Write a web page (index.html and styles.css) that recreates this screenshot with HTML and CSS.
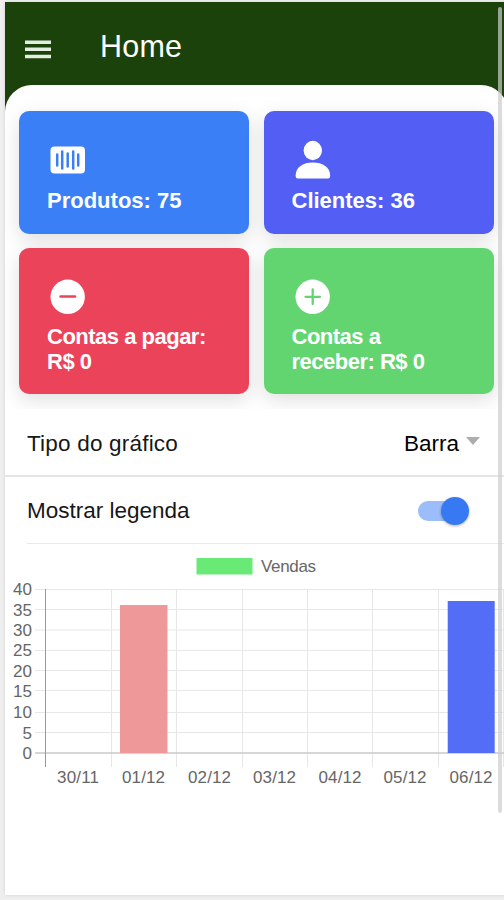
FILE: index.html
```html
<!DOCTYPE html>
<html lang="pt-BR">
<head>
    <meta charset="UTF-8">
    <title>Home</title>
    <link rel="stylesheet" href="styles.css">
</head>
<body>
    <div class="app">
        <header class="toolbar">
            <svg class="menu-icon" width="26" height="20" viewBox="0 0 26 20">
                <path d="M0 2.2h26M0 9.3h26M0 16.5h26" stroke="#e3eee0" stroke-width="3.6"/>
            </svg>
            <h1 class="title">Home</h1>
        </header>

        <main class="content">
            <div class="cards">
                <div class="card card-blue">
                    <svg class="icon" width="42" height="42" viewBox="0 0 42 42">
                        <rect x="3.5" y="7.5" width="34.5" height="27" rx="4" fill="#fff"/>
                        <path d="M10.2 15.5v11M15.2 12.5v17M20.7 14.5v13M26.2 12.5v17M31.2 15.5v11" stroke="#3a7ff6" stroke-width="2.5" stroke-linecap="round"/>
                    </svg>
                    <div class="label">Produtos: 75</div>
                </div>
                <div class="card card-purple">
                    <svg class="icon" width="42" height="42" viewBox="0 0 42 42">
                        <ellipse cx="20.8" cy="11.5" rx="9.2" ry="9.7" fill="#fff"/>
                        <path d="M3.6 37C3.6 28 11 23.5 20.8 23.5S38.2 28 38.2 37Q38.2 39.5 36 39.5H5.8Q3.6 39.5 3.6 37z" fill="#fff"/>
                    </svg>
                    <div class="label">Clientes: 36</div>
                </div>
                <div class="card card-red">
                    <svg class="icon" width="42" height="42" viewBox="0 0 42 42">
                        <circle cx="20.7" cy="20.8" r="17.2" fill="#fff"/>
                        <path d="M13.5 20.5h14.5" stroke="#eb445a" stroke-width="2.5" stroke-linecap="round"/>
                    </svg>
                    <div class="label">Contas a pagar: R$ 0</div>
                </div>
                <div class="card card-green">
                    <svg class="icon" width="42" height="42" viewBox="0 0 42 42">
                        <circle cx="20.7" cy="20.8" r="17.2" fill="#fff"/>
                        <path d="M13.5 20.8h14.5M20.7 13.5v14.5" stroke="#62d571" stroke-width="2.3" stroke-linecap="round"/>
                    </svg>
                    <div class="label">Contas a receber: R$ 0</div>
                </div>
            </div>

            <div class="item item-select">
                <span class="item-label">Tipo do gráfico</span>
                <span class="select">Barra <i class="arrow"></i></span>
            </div>
            <div class="item item-toggle">
                <span>Mostrar legenda</span>
                <span class="toggle"><i class="knob"></i></span>
            </div>

            <svg class="chart" width="499" height="256" viewBox="5 544 499 256">
                <rect x="196.5" y="558" width="56" height="16.5" fill="#69e976"/>
                <text x="261" y="571.5" textLength="55">Vendas</text>

                <path class="grid" d="M35 589.5H504M35 609.5H504M35 630H504M35 650.5H504M35 670.5H504M35 690.5H504M35 712.5H504M35 732.5H504"/>
                <path class="grid" d="M111.5 589V767M176.5 589V767M242.5 589V767M307.5 589V767M372.5 589V767M438.5 589V767M503.5 589V767"/>
                <path class="zero" d="M35 753H504"/>
                <path class="axis" d="M45.5 589V767"/>

                <rect x="120" y="605" width="47.5" height="148" fill="#ee9899"/>
                <rect x="447.7" y="601" width="47" height="152" fill="#536df6"/>

                <g text-anchor="end">
                    <text x="32" y="594.5">40</text>
                    <text x="32" y="615.5">35</text>
                    <text x="32" y="635.8">30</text>
                    <text x="32" y="656.3">25</text>
                    <text x="32" y="676.5">20</text>
                    <text x="32" y="697">15</text>
                    <text x="32" y="718">10</text>
                    <text x="32" y="738.5">5</text>
                    <text x="32" y="759">0</text>
                </g>
                <g>
                    <text x="57" y="782.8" textLength="42">30/11</text>
                    <text x="122" y="782.8" textLength="43">01/12</text>
                    <text x="188" y="782.8" textLength="43">02/12</text>
                    <text x="253" y="782.8" textLength="43">03/12</text>
                    <text x="318.5" y="782.8" textLength="43">04/12</text>
                    <text x="383.5" y="782.8" textLength="43">05/12</text>
                    <text x="449.5" y="782.8" textLength="43">06/12</text>
                </g>
            </svg>
        </main>
        <div class="scrollbar"></div>
    </div>
</body>
</html>
```

FILE: styles.css
```css
* {
    box-sizing: border-box;
}

body {
    margin: 0;
    padding: 2px 0 0 5px;
    height: 900px;
    overflow: hidden;
    background-color: #efefef;
    font-family: "Liberation Sans", Arial, sans-serif;
}

.app {
    position: relative;
    width: 503px;
    height: 893px;
    background: linear-gradient(#1b420b 120px, #fff 120px);
    box-shadow: 0 0 3px #d0d0d0;
}

.toolbar {
    display: flex;
    align-items: center;
    height: 83px;
    padding: 5px 20px 0;
}

.menu-icon {
    margin-top: 7px;
}

.title {
    margin: 0 0 0 49px;
    font-size: 30.5px;
    font-weight: normal;
    letter-spacing: 0.2px;
    color: #fff;
}

.content {
    height: 810px;
    border-radius: 27px 27px 0 0;
    background-color: #fff;
}

.cards {
    display: grid;
    grid-template-columns: 230px 230.5px;
    grid-template-rows: 123px 146px;
    gap: 14px 14.5px;
    height: 324px;
    padding: 26px 14px 0;
    overflow: hidden;
}

.card {
    padding: 28px;
    border-radius: 10px;
    color: #fff;
    box-shadow: 0 6px 20px rgba(0, 0, 0, 0.13);
}

.card-blue {
    background-color: #3a7ff6;
}

.card-purple {
    background-color: #535ff4;
}

.card-red {
    background-color: #eb445a;
}

.card-green {
    background-color: #62d571;
}

.icon {
    display: block;
}

.label {
    margin-top: 7px;
    font-size: 22px;
    font-weight: bold;
    line-height: 25px;
}

.card-red .label,
.card-green .label {
    margin-top: 6px;
    letter-spacing: -0.5px;
}

.item {
    display: flex;
    align-items: center;
    justify-content: space-between;
    font-size: 22.5px;
    color: #171717;
}

.item-select {
    height: 68px;
    padding: 3px 24px 0 22px;
    border-bottom: 2px solid #e5e5e5;
}

.item-label {
    letter-spacing: 0.2px;
}

.item-toggle {
    height: 67px;
    margin-left: 22px;
    padding: 2px 43px 0 0;
    border-bottom: 1px solid #e9e9e9;
}

.select {
    display: flex;
    align-items: center;
    gap: 7px;
    color: #000;
}

.item-select .select {
    margin-right: 4px;
}

.arrow {
    margin-bottom: 6px;
    border: 7px solid transparent;
    border-top: 8px solid #adadad;
    border-bottom: 0;
}

.toggle {
    display: flex;
    align-items: center;
    justify-content: flex-end;
    width: 47px;
    height: 20px;
    border-radius: 10px;
    background-color: #9bbdfb;
}

.knob {
    flex: none;
    width: 28px;
    height: 28px;
    margin-right: -4px;
    border-radius: 50%;
    background-color: #3679f3;
    box-shadow: 0 1px 3px rgba(0, 0, 0, 0.3);
}

.chart {
    display: block;
    font-size: 17px;
    fill: #666;
}

.grid {
    stroke: #e7e7e7;
}

.zero {
    stroke: #c8c8c8;
    stroke-width: 1.5;
}

.axis {
    stroke: #999;
}

.scrollbar {
    position: absolute;
    top: 5px;
    left: 493px;
    width: 4px;
    height: 806px;
    border-radius: 2px;
    background-color: rgba(205, 205, 205, 0.7);
}
```
